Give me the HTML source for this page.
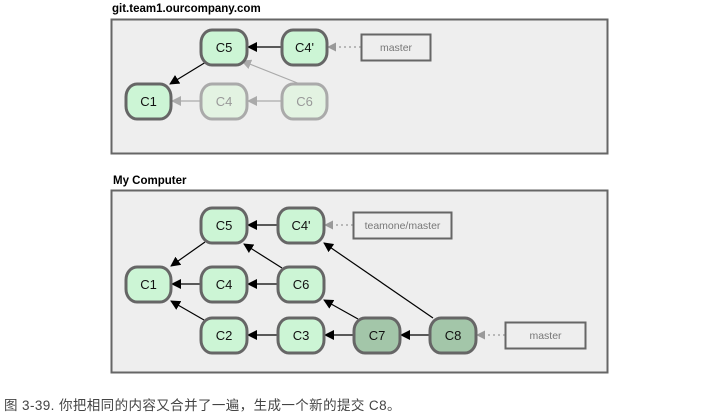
<!DOCTYPE html>
<html><head><meta charset="utf-8"><style>
html,body{margin:0;padding:0;background:#fff;width:706px;height:420px;overflow:hidden}
svg{display:block}
</style></head><body>
<svg width="706" height="420" viewBox="0 0 706 420" xmlns="http://www.w3.org/2000/svg" font-family="'Liberation Sans', sans-serif">
<defs>
<marker id="a" viewBox="0 0 10 10" refX="9" refY="5" markerWidth="10" markerHeight="10" markerUnits="userSpaceOnUse" orient="auto"><path d="M0,0 L10,5 L0,10 z" fill="#000"/></marker>
<marker id="g" viewBox="0 0 10 10" refX="9" refY="5" markerWidth="10" markerHeight="10" markerUnits="userSpaceOnUse" orient="auto"><path d="M0,0 L10,5 L0,10 z" fill="#aaa"/></marker>
<marker id="d" viewBox="0 0 10 10" refX="9" refY="5" markerWidth="9" markerHeight="9" markerUnits="userSpaceOnUse" orient="auto"><path d="M0,0 L10,5 L0,10 z" fill="#999"/></marker>
</defs>
<text x="112" y="12" font-size="11.5" font-weight="bold" fill="#000">git.team1.ourcompany.com</text>
<rect x="111.5" y="19.5" width="496" height="134" fill="#eee" stroke="#666" stroke-width="2"/>
<g stroke-width="1.2" fill="none">
<line x1="281" y1="47" x2="248" y2="47" stroke="#000" marker-end="url(#a)"/>
<line x1="206" y1="62" x2="170" y2="84" stroke="#000" marker-end="url(#a)"/>
<line x1="300" y1="84" x2="242" y2="61" stroke="#aaa" marker-end="url(#g)"/>
<line x1="281" y1="101" x2="248" y2="101" stroke="#aaa" marker-end="url(#g)"/>
<line x1="200" y1="101" x2="172" y2="101" stroke="#aaa" marker-end="url(#g)"/>
<line x1="361" y1="47" x2="328" y2="47" stroke="#999" stroke-dasharray="2,3" marker-end="url(#d)"/>
</g>
<g stroke-width="3" font-size="13" text-anchor="middle">
<rect x="201" y="30" width="46" height="35" rx="11" ry="13" fill="#ccf5d5" stroke="#666"/><text x="224" y="52" stroke="none" fill="#111">C5</text>
<rect x="282" y="30" width="45" height="35" rx="11" ry="13" fill="#ccf5d5" stroke="#666"/><text x="304.5" y="52" stroke="none" fill="#111">C4'</text>
<rect x="126" y="84" width="45" height="35" rx="11" ry="13" fill="#ccf5d5" stroke="#666"/><text x="148.5" y="106" stroke="none" fill="#111">C1</text>
<rect x="201" y="84" width="46" height="35" rx="11" ry="13" fill="#e3f3e2" stroke="#aaa"/><text x="224" y="106" stroke="none" fill="#999">C4</text>
<rect x="282" y="84" width="45" height="35" rx="11" ry="13" fill="#e3f3e2" stroke="#aaa"/><text x="304.5" y="106" stroke="none" fill="#999">C6</text>
</g>
<rect x="361.5" y="34.5" width="69" height="26" fill="#eee" stroke="#666" stroke-width="2"/>
<text x="396" y="51" font-size="10.5" fill="#777" text-anchor="middle">master</text>

<text x="113" y="184" font-size="11.5" font-weight="bold" fill="#000">My Computer</text>
<rect x="111.5" y="190.5" width="496" height="182" fill="#eee" stroke="#666" stroke-width="2"/>
<g stroke-width="1.2" fill="none" stroke="#000">
<line x1="277" y1="225" x2="248" y2="225" marker-end="url(#a)"/>
<line x1="205" y1="242" x2="171" y2="266" marker-end="url(#a)"/>
<line x1="200" y1="284" x2="172" y2="284" marker-end="url(#a)"/>
<line x1="277" y1="284" x2="248" y2="284" marker-end="url(#a)"/>
<line x1="282" y1="268" x2="244" y2="244" marker-end="url(#a)"/>
<line x1="204" y1="320" x2="171" y2="301" marker-end="url(#a)"/>
<line x1="277" y1="335" x2="248" y2="335" marker-end="url(#a)"/>
<line x1="353" y1="335" x2="325" y2="335" marker-end="url(#a)"/>
<line x1="358" y1="319" x2="324" y2="300" marker-end="url(#a)"/>
<line x1="429" y1="335" x2="401" y2="335" marker-end="url(#a)"/>
<line x1="433" y1="318" x2="324" y2="243" marker-end="url(#a)"/>
<line x1="353" y1="225" x2="325" y2="225" stroke="#999" stroke-dasharray="2,3" marker-end="url(#d)"/>
<line x1="505" y1="335" x2="477" y2="335" stroke="#999" stroke-dasharray="2,3" marker-end="url(#d)"/>
</g>
<g stroke-width="3" font-size="13" text-anchor="middle" fill="#ccf5d5" stroke="#666">
<rect x="201" y="208" width="46" height="35" rx="11" ry="13"/>
<rect x="278" y="208" width="46" height="35" rx="11" ry="13"/>
<rect x="126" y="267" width="45" height="35" rx="11" ry="13"/>
<rect x="201" y="267" width="46" height="35" rx="11" ry="13"/>
<rect x="278" y="267" width="46" height="35" rx="11" ry="13"/>
<rect x="201" y="318" width="46" height="35" rx="11" ry="13"/>
<rect x="278" y="318" width="46" height="35" rx="11" ry="13"/>
<rect x="354" y="318" width="46" height="35" rx="11" ry="13" fill="#a3c6a9"/>
<rect x="430" y="318" width="46" height="35" rx="11" ry="13" fill="#a3c6a9"/>
</g>
<g font-size="13" text-anchor="middle" fill="#111">
<text x="224" y="230">C5</text>
<text x="301" y="230">C4'</text>
<text x="148.5" y="289">C1</text>
<text x="224" y="289">C4</text>
<text x="301" y="289">C6</text>
<text x="224" y="340">C2</text>
<text x="301" y="340">C3</text>
<text x="377" y="340">C7</text>
<text x="453" y="340">C8</text>
</g>
<rect x="353.5" y="212.5" width="98" height="26" fill="#eee" stroke="#666" stroke-width="2"/>
<text x="402.5" y="229" font-size="10.5" fill="#777" text-anchor="middle">teamone/master</text>
<rect x="505.5" y="322.5" width="80" height="26" fill="#eee" stroke="#666" stroke-width="2"/>
<text x="545.5" y="339" font-size="10.5" fill="#777" text-anchor="middle">master</text>

<text x="4" y="410" font-size="13.5" letter-spacing="0.4" fill="#444" font-family="'Liberation Sans','Noto Sans CJK SC',sans-serif">图 3-39. 你把相同的内容又合并了一遍，生成一个新的提交 C8。</text>
</svg>
</body></html>
